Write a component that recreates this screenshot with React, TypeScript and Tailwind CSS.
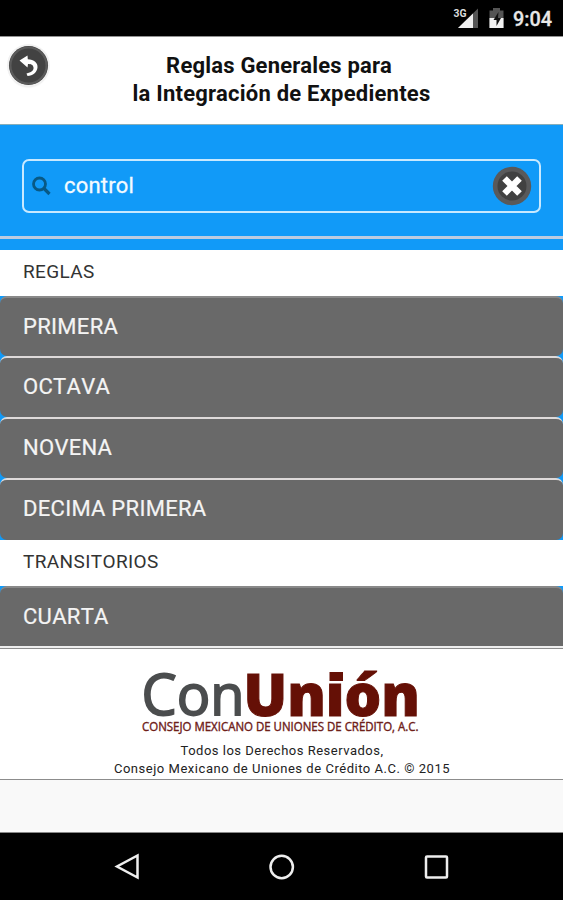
import type { ReactNode } from "react";

function StatusBar() {
  return (
    <div className="flex h-9 justify-end bg-black">
      <svg width="123" height="36" viewBox="440 0 123 36" className="block" role="img" aria-label="3G 9:04">
        <path d="M478 8.500V28H458Z" fill="#555" />
        <path d="M473 13.500V28H458Z" fill="#efefef" />
        <text x="453.500" y="17" fontSize="11" fontWeight="700" textLength="13" lengthAdjust="spacingAndGlyphs" fill="#dcdcdc">3G</text>
        <path d="M493 8h7v2.500h3.500V28h-14V10.500H493Z" fill="#555" />
        <path d="M489.500 18h14v10h-14Z" fill="#f2f2f2" />
        <path d="M498.500 12l-5 8h3v6l4.500-8h-3Z" fill="#111" />
        <text x="513" y="26" fontSize="20" fontWeight="500" textLength="39" lengthAdjust="spacingAndGlyphs" fill="#e8e8e8" stroke="#e8e8e8" strokeWidth="0.300">9:04</text>
      </svg>
    </div>
  );
}

function Header() {
  return (
    <header className="flex h-[89px] border-y border-t-[#929292] border-b-[#86aeba] bg-white">
      <div className="w-14 shrink-0 pl-[9px] pt-[9px]">
        <div className="size-[39px] rounded-full bg-[#424242] ring-2 ring-[#f1f1f1] shadow-[0_2px_2px_#ddd]">
          <svg width="39" height="39" viewBox="0 0 39 39" className="block">
            <circle cx="19.500" cy="19.500" r="18" fill="none" stroke="#5b5b5b" strokeWidth="2" />
            <path d="M10.500 14.500L18.500 9.500L18.800 13.300C25 13.500 29 17 28.500 21.500C28 26.500 24 29.500 18.500 30L17.500 27.500C22 26.500 25 24.500 24.500 21.500C24 18.500 22 18 19 18L18.500 21.500Z" fill="white" />
          </svg>
        </div>
      </div>
      <h1 className="w-[451px] pt-[15px] text-center text-[22px] leading-7 font-bold text-[#111]">
        <span className="block pr-[5px] tracking-[0.2px]">Reglas Generales para</span>
        <span className="block tracking-[0.23px]">la Integración de Expedientes</span>
      </h1>
    </header>
  );
}

function Search() {
  return (
    <div className="flex h-[125px] flex-col bg-[#119af8]">
      <div className="mx-[22px] mt-[34px] flex h-[54px] items-center rounded-[7px] border-2 border-[#c8e9ff] pl-[7px] pr-[7px]">
        <svg width="22" height="22" viewBox="0 0 22 22" className="shrink-0">
          <circle cx="8.500" cy="9" r="6" fill="none" stroke="#085985" strokeWidth="2.800" />
          <path d="M13 13.500l5.500 5.500" stroke="#085985" strokeWidth="3.200" />
        </svg>
        <span className="ml-[11px] flex-1 text-[22px] leading-6 tracking-[0.2px] text-[#f4faff] [-webkit-text-stroke:0.3px_#f4faff]">control</span>
        <svg width="40" height="40" viewBox="0 0 40 40" className="shrink-0">
          <circle cx="20" cy="20" r="19.200" fill="#59595a" />
          <circle cx="20" cy="20" r="14.500" fill="#414141" />
          <path d="M12.500 12.500l15 15M27.500 12.500L12.500 27.500" stroke="white" strokeWidth="6.500" />
        </svg>
      </div>
      <div className="mt-[23px] h-[3px] bg-[#bdcbe0]" />
    </div>
  );
}

function Divider({ children }: { children: ReactNode }) {
  return <h2 className="h-[46px] bg-white pl-[23px] text-[19px] leading-[44px] tracking-[0.38px] text-[#333] [font-kerning:none]">{children}</h2>;
}

function Item({ name, className }: { name: string; className: string }) {
  return (
    <li className={"rounded-[7px] border-t-2 bg-[#696969] pl-[23px] text-[22px] leading-[57px] tracking-[0.3px] text-[#f4f4f4] [font-kerning:none] [-webkit-text-stroke:0.2px_#f4f4f4] " + className}>
      {name}
    </li>
  );
}

function Footer() {
  return (
    <footer className="h-[132px] border-y border-[#8c8c8c] bg-white text-center text-[13px] text-[#222]">
      <svg width="563" height="93" viewBox="0 649 563 93" className="block" role="img" aria-label="ConUnión">
        <g style={{ fontFamily: '"Open Sans", "Noto Sans", sans-serif' }}>
          <text x="141.500" y="714.500" fontSize="57" textLength="103" lengthAdjust="spacingAndGlyphs" fill="#4b4d4e" stroke="#4b4d4e" strokeWidth="1.800">Con</text>
          <text x="243.500" y="715.500" fontSize="58" fontWeight="800" textLength="176.500" lengthAdjust="spacingAndGlyphs" fill="#651006" stroke="#651006">Unión</text>
          {/* squared dot of the "i" */}
          <rect x="326" y="667" width="19.500" height="15.500" fill="white" />
          <rect x="329.500" y="672" width="13.500" height="9" fill="#651006" />
          <text x="142" y="731" fontSize="12.500" textLength="276.500" lengthAdjust="spacingAndGlyphs" fill="#6e2018" stroke="#6e2018" strokeWidth="0.400">CONSEJO MEXICANO DE UNIONES DE CRÉDITO, A.C.</text>
        </g>
      </svg>
      <p className="pl-px leading-[18px] tracking-[0.5px]">Todos los Derechos Reservados,</p>
      <p className="pl-px leading-[18px] tracking-[0.53px]">Consejo Mexicano de Uniones de Crédito A.C. © 2015</p>
    </footer>
  );
}

function NavBar() {
  return (
    <nav className="h-[67px] bg-black">
      <svg width="563" height="67" viewBox="0 833 563 67" className="block" fill="none" stroke="#eee" strokeWidth="2.500">
        <path d="M137.500 855.500V877.500L117 866.500Z" />
        <circle cx="281.700" cy="867" r="11.200" />
        <rect x="426" y="856.500" width="21" height="21" rx="1" />
      </svg>
    </nav>
  );
}

export default function App() {
  return (
    <div className="h-[900px] w-[563px] overflow-hidden bg-[#f9f9f9] font-[Roboto,sans-serif]">
      <StatusBar />
      <Header />
      <Search />
      <main className="bg-[#119af8]">
        <Divider>REGLAS</Divider>
        <ul>
          <Item name="PRIMERA" className="h-[60px] border-[#898989]" />
          <Item name="OCTAVA" className="h-[61px] border-[#dedada]" />
          <Item name="NOVENA" className="h-[61px] border-[#dedada]" />
          <Item name="DECIMA PRIMERA" className="h-[62px] border-[#dedada]" />
        </ul>
        <Divider>TRANSITORIOS</Divider>
        <ul>
          <Item name="CUARTA" className="h-[60px] rounded-b-none border-[#898989]" />
        </ul>
        <div className="h-[2px] bg-[#eee]" />
      </main>
      <Footer />
      <div className="h-[53px] border-b border-[#888] bg-[#f9f9f9]" />
      <NavBar />
    </div>
  );
}
